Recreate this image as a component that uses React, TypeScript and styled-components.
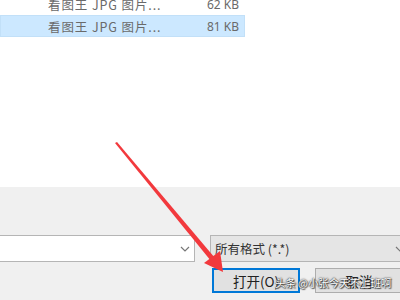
import React from "react"
import styled, { createGlobalStyle } from "styled-components"

const Global = createGlobalStyle`
  html, body { margin: 0; padding: 0; }
  body {
    width: 400px;
    height: 300px;
    overflow: hidden;
    font-family: "Noto Sans CJK SC", "Noto Sans", sans-serif;
  }
`

const Window = styled.div`
  position: relative;
  width: 400px;
  height: 300px;
  overflow: hidden;
  display: flex;
  flex-direction: column;
  background: #f0f0f0;
`

const FileList = styled.div`
  height: 194px;
  flex-shrink: 0;
  background: #ffffff;
  display: flex;
  flex-direction: column;
  margin-top: -7px;
`

const Row = styled.div<{ selected?: boolean }>`
  display: flex;
  align-items: center;
  height: 22px;
  width: 245px;
  box-sizing: border-box;
  padding-left: 47px;
  padding-right: 5px;
  font-size: 12.5px;
  color: #6a6a6a;
  background: ${(p) => (p.selected ? "#cce8ff" : "transparent")};
  border: 1px solid ${(p) => (p.selected ? "#c2e0f8" : "transparent")};
`

const Name = styled.span`
  flex: 1;
  white-space: nowrap;
  letter-spacing: 0.9px;
`

const Size = styled.span`
  font-family: "Noto Sans", sans-serif;
  font-size: 12px;
`

const Footer = styled.div`
  flex: 1;
  padding-top: 48px;
  display: flex;
  flex-direction: column;
  gap: 6px;
`

const ComboRow = styled.div`
  display: flex;
`

const Combo = styled.div<{ filled?: boolean; width: number; offset?: number }>`
  height: 27px;
  width: ${(p) => p.width}px;
  margin-left: ${(p) => p.offset ?? 0}px;
  flex-shrink: 0;
  box-sizing: border-box;
  border: 1px solid #b5b5b5;
  background: ${(p) => (p.filled ? "#e5e5e5" : "#ffffff")};
  display: flex;
  align-items: center;
  padding: 0 4px;
  font-size: 12.5px;
  color: #333;
`

const ComboText = styled.span`
  flex: 1;
  white-space: nowrap;
`

const Chevron = () => (
  <svg width="10" height="6" viewBox="0 0 10 6">
    <path d="M1 1 L5 5 L9 1" fill="none" stroke="#777" strokeWidth="1.2" />
  </svg>
)

const ButtonRow = styled.div`
  display: flex;
  gap: 15px;
  padding-left: 212px;
`

const Button = styled.div<{ primary?: boolean }>`
  width: 88px;
  height: 25px;
  box-sizing: border-box;
  border: ${(p) => (p.primary ? "2px solid #0078d7" : "1px solid #adadad")};
  background: #e1e1e1;
  display: flex;
  align-items: center;
  justify-content: center;
  font-size: 13.5px;
  color: #222;
  flex-shrink: 0;
`

const Overlay = styled.svg`
  position: absolute;
  left: 0;
  top: 0;
  pointer-events: none;
`

const Watermark = styled.div`
  position: absolute;
  left: 275px;
  top: 275px;
  font-size: 10.5px;
  letter-spacing: -0.1px;
  color: #ffffff;
  white-space: nowrap;
  text-shadow: 0 0 2px #333, 0 0 1px #333, 1px 1px 1px #444;
`

export default function App() {
  return (
    <Window>
      <Global />
      <FileList>
        <Row>
          <Name>看图王 JPG 图片...</Name>
          <Size>62 KB</Size>
        </Row>
        <Row selected>
          <Name>看图王 JPG 图片...</Name>
          <Size>81 KB</Size>
        </Row>
      </FileList>
      <Footer>
        <ComboRow>
          <Combo width={197} offset={-2}>
            <ComboText />
            <Chevron />
          </Combo>
          <Combo width={200} offset={15} filled>
            <ComboText>所有格式 (*.*)</ComboText>
            <Chevron />
          </Combo>
        </ComboRow>
        <ButtonRow>
          <Button primary>打开(O)</Button>
          <Button>取消</Button>
        </ButtonRow>
      </Footer>
      <Overlay width="400" height="300" viewBox="0 0 400 300">
        <polygon points="115,143 117,142 215,258 211,261" fill="#f2393d" />
        <polygon points="223,272 204,263 220,251" fill="#f2393d" />
      </Overlay>
      <Watermark>头条 @小张今天不上班啊</Watermark>
    </Window>
  )
}
